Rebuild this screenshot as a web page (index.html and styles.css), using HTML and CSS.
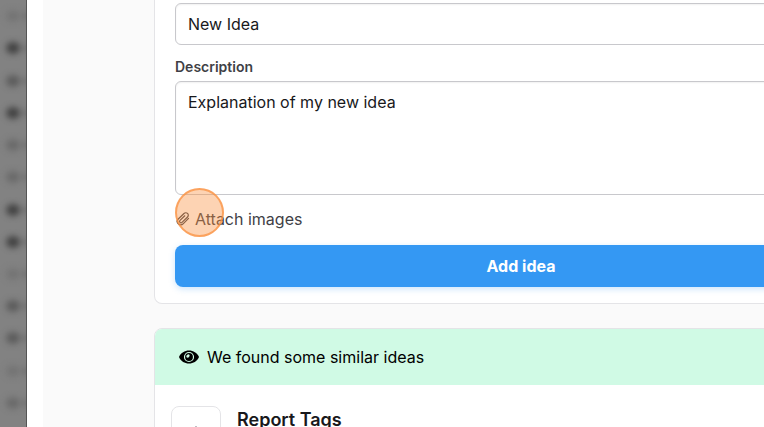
FILE: index.html
```
<!DOCTYPE html>
<html lang="en">
  <head>
    <meta charset="UTF-8" />
    <meta name="viewport" content="width=device-width, initial-scale=1.0" />
    <title>New Idea</title>
    <link rel="stylesheet" href="styles.css">
  </head>
  <body>
    <div class="page">
      <div class="sidebar" aria-hidden="true">
        <div class="item faint"></div>
        <div class="item dark"></div>
        <div class="item"></div>
        <div class="item dark"></div>
        <div class="item light"></div>
        <div class="item light"></div>
        <div class="item dark"></div>
        <div class="item dark"></div>
        <div class="item faint"></div>
        <div class="item"></div>
        <div class="item"></div>
        <div class="item faint"></div>
        <div class="item light"></div>
      </div>
      <main class="main">
        <form class="card idea-form">
          <input class="field" type="text" value="New Idea" aria-label="Title" />
          <label class="label" for="description">Description</label>
          <textarea class="field description" id="description">Explanation of my new idea</textarea>
          <label class="attach">
            <span class="click-marker"></span>
            <svg class="clip" viewBox="0 0 24 24" fill="none" stroke="currentColor" stroke-width="2" stroke-linecap="round">
              <path d="M21.5 11l-9.3 9.3a5.8 5.8 0 0 1-8.3-8.3l9.8-9.5a4.3 4.3 0 0 1 6.1 6.1l-9.5 9.3a2.4 2.4 0 0 1-3.4-3.4l8.2-8" />
            </svg>
            <span>Attach images</span>
            <input class="file" type="file" multiple />
          </label>
          <button class="submit" type="button">Add idea</button>
        </form>
        <section class="card similar">
          <div class="similar-header">
            <svg class="eye" viewBox="0 0 20 14">
              <path d="M10 .5C5.600.5 2 3 .3 6.300a1.500 1.500 0 0 0 0 1.400C2 11 5.600 13.500 10 13.500s8-2.500 9.700-5.800a1.500 1.500 0 0 0 0-1.400C18 3 14.400.5 10 .5z" />
              <circle cx="10" cy="7" r="4.500" fill="none" stroke="#d0fae5" stroke-width="1.200" />
              <path d="M10 4.200a2.800 2.800 0 0 0-2.700 2.800 1.500 1.500 0 0 0 2.700-2.800z" fill="#d0fae5" />
            </svg>
            <span>We found some similar ideas</span>
          </div>
          <div class="idea">
            <button class="vote" type="button" aria-label="Vote">
              <svg class="caret" viewBox="0 0 16 10"><path d="M8 0l7 8H1z" /></svg>
            </button>
            <h2 class="idea-title">Report Tags</h2>
          </div>
        </section>
      </main>
    </div>
  </body>
</html>
```
FILE: styles.css
```
* {
  box-sizing: border-box;
}

body {
  margin: 0;
  overflow: hidden;
  background-color: #fff;
  color: #18181b;
  font-family: Inter, "Liberation Sans", sans-serif;
  font-size: 16px;
  line-height: 24px;
}

.page {
  display: flex;
  height: 100vh;
  overflow: hidden;
}

.sidebar {
  display: flex;
  flex-direction: column;
  flex: none;
  width: 27px;
  margin-right: 16px;
  padding-bottom: 8px;
  border-right: 1px solid #555;
  background-color: #828282;
  overflow: hidden;
}

.item {
  display: flex;
  flex: 1;
  align-items: center;
  gap: 2px;
  padding-left: 6px;
  filter: blur(3px);
}

.item::before,
.item::after {
  content: "";
  flex: none;
  width: 14px;
  height: 12px;
  border-radius: 50%;
  background-color: #5c5c5c;
}

.item::after {
  height: 8px;
  opacity: 0.5;
}

.item.dark::before {
  background-color: #424242;
}

.item.light::before {
  background-color: #6a6a6a;
}

.item.faint::before {
  background-color: #747474;
}

.main {
  flex: 1;
  padding: 0 111px;
  background-color: #fafafa;
}

.card {
  width: 100%;
  min-width: 734px;
  border: 1px solid #e4e4e7;
  border-radius: 8px;
  background-color: #fff;
}

.idea-form {
  display: flex;
  flex-direction: column;
  margin-bottom: 24px;
  padding: 3px 20px 16px;
  border-top: 0;
  border-radius: 0 0 8px 8px;
}

.field {
  width: 100%;
  height: 42px;
  padding: 8px 12px;
  border: 1px solid #c8c8cc;
  border-radius: 6px;
  background-color: #fff;
  box-shadow: inset 0 1px 2px rgba(0, 0, 0, 0.06);
  color: inherit;
  font: inherit;
  outline: none;
}

.label {
  margin: 12px 0 4px;
  color: #3f3f46;
  font-size: 14px;
  font-weight: 600;
  line-height: 20px;
}

.description {
  height: 114px;
  resize: none;
}

.attach {
  position: relative;
  display: flex;
  align-items: center;
  align-self: flex-start;
  gap: 4px;
  margin: 12px 0 14px;
  color: #3f3f46;
}

.clip {
  width: 16px;
  height: 14px;
}

.file {
  display: none;
}

/* highlights the last click */
.click-marker {
  position: absolute;
  top: -19px;
  left: 0;
  width: 49px;
  height: 49px;
  border: 2px solid rgba(249, 146, 66, 0.75);
  border-radius: 50%;
  background-color: rgba(249, 146, 66, 0.4);
}

.submit {
  height: 42px;
  border: 0;
  border-radius: 8px;
  background-color: #3498f3;
  box-shadow: 0 2px 6px rgba(52, 152, 243, 0.25);
  color: #fff;
  font: inherit;
  font-weight: 700;
}

.similar {
  overflow: hidden;
}

.similar-header {
  display: flex;
  align-items: center;
  gap: 8px;
  padding: 16px 24px;
  background-color: #d0fae5;
  color: #000;
}

.eye {
  width: 20px;
  height: 14px;
}

.idea {
  display: flex;
  gap: 16px;
  padding: 21px 16px;
}

.vote {
  display: flex;
  justify-content: center;
  width: 50px;
  height: 64px;
  padding: 19px 0;
  border: 1px solid #e4e4e7;
  border-radius: 8px;
  background-color: #fff;
}

.caret {
  width: 16px;
  height: 10px;
  fill: #71717a;
}

.idea-title {
  margin: 0;
  font-size: 18px;
  font-weight: 600;
  line-height: 28px;
}
```
